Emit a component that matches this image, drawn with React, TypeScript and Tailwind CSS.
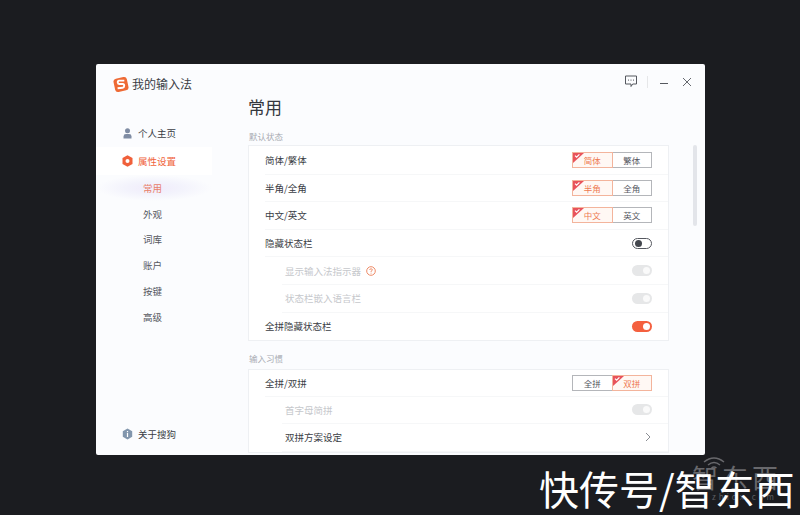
import React from "react";

const font = { fontFamily: '"Noto Sans CJK SC", "Noto Sans", sans-serif' };

function Seg({ a, b, active }: { a: string; b: string; active: 0 | 1 }) {
  const on = "relative flex-1 flex items-center justify-center text-[#ee7a50] bg-[#fff8f4] border border-[#f3b49c]";
  const off = "flex-1 flex items-center justify-center text-[#55585f] bg-white border border-[#b4b6ba]";
  const Flag = () => (
    <svg className="absolute left-0 top-0" width="11" height="10" viewBox="0 0 11 10">
      <path d="M0 0H11L0 10Z" fill="#e8535b" />
      <path d="M2 2.6L3.6 4.2L6.4 1.4" fill="none" stroke="#fff" strokeWidth="1.2" />
    </svg>
  );
  return (
    <div className="flex w-[80px] h-[16px] text-[8.5px] leading-none">
      <div className={active === 0 ? on : `${off} border-r-0`}>
        {active === 0 && <Flag />}
        {a}
      </div>
      <div className={active === 1 ? on : `${off} border-l-0`}>
        {active === 1 && <Flag />}
        {b}
      </div>
    </div>
  );
}

function Toggle({ kind }: { kind: "off" | "dis" | "on" }) {
  if (kind === "off")
    return (
      <div className="w-[20px] h-[11px] rounded-full border border-[#55585f] bg-white flex items-center pl-[2px]">
        <div className="w-[7px] h-[7px] rounded-full bg-[#44474e]" />
      </div>
    );
  if (kind === "dis")
    return (
      <div className="w-[20px] h-[11px] rounded-full bg-[#e6e7e8] flex items-center justify-end pr-[2px]">
        <div className="w-[7px] h-[7px] rounded-full bg-[#fafafa]" />
      </div>
    );
  return (
    <div className="w-[20px] h-[11px] rounded-full bg-[#f4603f] flex items-center justify-end pr-[2px]">
      <div className="w-[7px] h-[7px] rounded-full bg-white" />
    </div>
  );
}

function Row({
  label,
  sub,
  disabled,
  children,
  last,
  short,
}: {
  label: React.ReactNode;
  sub?: boolean;
  disabled?: boolean;
  children?: React.ReactNode;
  last?: boolean;
  short?: boolean;
}) {
  return (
    <div
      className={`${short ? "h-[26.4px]" : "h-[27.6px]"} shrink-0 flex items-center justify-between pr-[16px] ${sub ? "ml-[33px] pl-[3px]" : "ml-[16px]"} ${last ? "" : "border-b border-[#f6f7f8]"}`}
    >
      <div className={`text-[9.5px] flex items-center gap-[5px] ${disabled ? "text-[#c6c8cc]" : "text-[#3a3d44]"}`}>{label}</div>
      {children}
    </div>
  );
}

function NavHead({ label, icon, active }: { label: string; icon: React.ReactNode; active?: boolean }) {
  return (
    <div className={`h-[28px] flex items-center pl-[26px] gap-[5px] text-[9.5px] ${active ? "bg-white text-[#f0643c]" : "text-[#3a3d44]"}`}>
      <span className="w-[11px] h-[12px] flex items-center justify-center">{icon}</span>
      {label}
    </div>
  );
}

function NavSub({ label, active }: { label: string; active?: boolean }) {
  return (
    <div
      className={`h-[25.8px] flex items-center pl-[47px] text-[9.5px] ${active ? "text-[#e8806a] bg-[radial-gradient(ellipse_at_center,#f0ebfb_0%,#f3f3fc_35%,#fbfcfe_70%)]" : "text-[#55585f]"}`}
    >
      {label}
    </div>
  );
}

export default function App() {
  return (
    <div className="relative w-[800px] h-[515px] overflow-hidden bg-[#1b1c20] pl-[96px] pt-[64px]" style={font}>
      <div className="relative w-[609px] h-[391px] rounded-[2px] bg-[#fbfcfe] overflow-hidden flex">
        {/* sidebar */}
        <aside className="w-[116px] shrink-0 flex flex-col">
          <div className="mt-[10px] h-[20px] flex items-center pl-[17px] gap-[3px]">
            <svg width="16" height="17" viewBox="0 0 16 17">
              <rect x="1.2" y="1.7" width="13.6" height="13.6" rx="3" fill="#ee6a35" transform="rotate(-12 8 8.5)" />
              <path d="M11.3 4.6H6.2Q4.5 4.9 4.8 6.6Q5 8 6.4 8H9.6Q11.3 8.1 11.2 9.8Q11 11.6 9.6 11.7L4.6 12.3" fill="none" stroke="#fff" strokeWidth="1.9" />
            </svg>
            <span className="text-[12px] leading-[20px] text-[#3a3d44]">我的输入法</span>
          </div>
          <div className="h-[25px]" />
          <NavHead
            label="个人主页"
            icon={
              <svg width="9" height="11" viewBox="0 0 9 11">
                <circle cx="4.5" cy="2.8" r="2.5" fill="#7f8ca3" />
                <path d="M0.5 10.5V8.4Q0.5 6 3 6H6Q8.5 6 8.5 8.4V10.5Z" fill="#7f8ca3" />
              </svg>
            }
          />
          <NavHead
            active
            label="属性设置"
            icon={
              <svg width="11" height="12" viewBox="0 0 11 12">
                <path d="M5.5 0.3L10.5 3.1V8.9L5.5 11.7L0.5 8.9V3.1Z" fill="#f0603a" />
                <circle cx="5.5" cy="6" r="2" fill="#fff" />
              </svg>
            }
          />
          <NavSub label="常用" active />
          <NavSub label="外观" />
          <NavSub label="词库" />
          <NavSub label="账户" />
          <NavSub label="按键" />
          <NavSub label="高级" />
          <div className="mt-auto mb-[7px]">
            <NavHead
              label="关于搜狗"
              icon={
                <svg width="11" height="12" viewBox="0 0 11 12">
                  <path d="M5.5 0.5L10.2 3.2V8.8L5.5 11.5L0.8 8.8V3.2Z" fill="#8296ad" />
                  <rect x="4.9" y="5" width="1.2" height="4" fill="#fff" />
                  <rect x="4.9" y="3" width="1.2" height="1.2" fill="#fff" />
                </svg>
              }
            />
          </div>
        </aside>

        {/* main */}
        <main className="flex-1 min-w-0 pl-[36px] flex flex-col">
          <h1 className="mt-[30px] h-[26px] text-[17px] leading-[26px] font-normal text-[#33363d]">常用</h1>
          <div className="mt-[9px] h-[14px] text-[8.5px] leading-[14px] text-[#a8abb2] pl-[1px]">默认状态</div>
          <section className="mt-[2px] w-[421px] shrink-0 border border-[#eef0f3] bg-white flex flex-col pt-[1px]">
            <Row label="简体/繁体"><Seg a="简体" b="繁体" active={0} /></Row>
            <Row label="半角/全角"><Seg a="半角" b="全角" active={0} /></Row>
            <Row label="中文/英文"><Seg a="中文" b="英文" active={0} /></Row>
            <Row label="隐藏状态栏"><Toggle kind="off" /></Row>
            <Row
              sub
              disabled
              label={
                <>
                  显示输入法指示器
                  <svg width="10" height="10" viewBox="0 0 10 10">
                    <circle cx="5" cy="5" r="4.3" fill="none" stroke="#ee8a66" strokeWidth="1" />
                    <path d="M3.6 4Q3.7 2.8 5 2.8Q6.4 2.8 6.4 3.9Q6.4 4.6 5 5.3V6" fill="none" stroke="#ee8a66" strokeWidth="0.9" />
                    <rect x="4.6" y="6.7" width="0.9" height="0.9" fill="#ee8a66" />
                  </svg>
                </>
              }
            >
              <Toggle kind="dis" />
            </Row>
            <Row sub disabled label="状态栏嵌入语言栏"><Toggle kind="dis" /></Row>
            <Row last label="全拼隐藏状态栏"><Toggle kind="on" /></Row>
          </section>
          <div className="mt-[10px] h-[14px] text-[8.5px] leading-[14px] text-[#a8abb2] pl-[1px]">输入习惯</div>
          <section className="mt-[4px] w-[421px] shrink-0 border border-[#eef0f3] bg-white flex flex-col">
            <Row short label="全拼/双拼"><Seg a="全拼" b="双拼" active={1} /></Row>
            <Row sub disabled label="首字母简拼"><Toggle kind="dis" /></Row>
            <Row sub label="双拼方案设定">
              <svg width="20" height="10" viewBox="0 0 20 10">
                <path d="M14 1L18 5L14 9" fill="none" stroke="#8b8e94" strokeWidth="1" />
              </svg>
            </Row>
          </section>
        </main>

        {/* window controls */}
        <div className="absolute right-[13px] top-[11px] flex items-center">
          <svg width="14" height="13" viewBox="0 0 14 13">
            <path d="M1.5 1H12.5V9H8.7L7 11.5V9H1.5Z" fill="none" stroke="#55585f" strokeWidth="1" />
            <rect x="4" y="4.6" width="1" height="1" fill="#55585f" />
            <rect x="6.5" y="4.6" width="1" height="1" fill="#55585f" />
            <rect x="9" y="4.6" width="1" height="1" fill="#55585f" />
          </svg>
          <div className="w-px h-[12px] bg-[#e6e7e9] ml-[9px]" />
          <svg className="ml-[11px]" width="10" height="10" viewBox="0 0 10 10">
            <path d="M1 6.5H9" stroke="#55585f" strokeWidth="1" />
          </svg>
          <svg className="ml-[13px]" width="10" height="10" viewBox="0 0 10 10">
            <path d="M1 1L9 9M9 1L1 9" stroke="#55585f" strokeWidth="0.9" />
          </svg>
        </div>

        {/* scrollbar */}
        <div className="absolute left-[597px] top-[81px] w-[4px] h-[81px] rounded-full bg-[#e3e5ea]" />
      </div>

      {/* watermark, lying under the caption */}
      <svg className="absolute left-[702px] top-[456px]" width="24" height="14" viewBox="0 0 24 14">
        <path d="M2 6Q12 -2 22 6M6 9Q12 4 18 9M9.5 12Q12 10 14.5 12" fill="none" stroke="#68686c" strokeWidth="1.5" />
      </svg>
      <div className="absolute left-[692px] top-[462px] text-[26px] leading-[30px] tracking-[4px] text-[#68686c] whitespace-nowrap">智东西</div>
      <div className="absolute left-[712px] top-[492px] text-[8px] leading-[10px] tracking-[3px] text-[#5c5d60] whitespace-nowrap">zhidx.com</div>

      {/* caption */}
      <div className="absolute left-[539px] top-[468px] text-[40px] leading-[40px] text-white whitespace-nowrap">
        快传号/智东西
      </div>
    </div>
  );
}
